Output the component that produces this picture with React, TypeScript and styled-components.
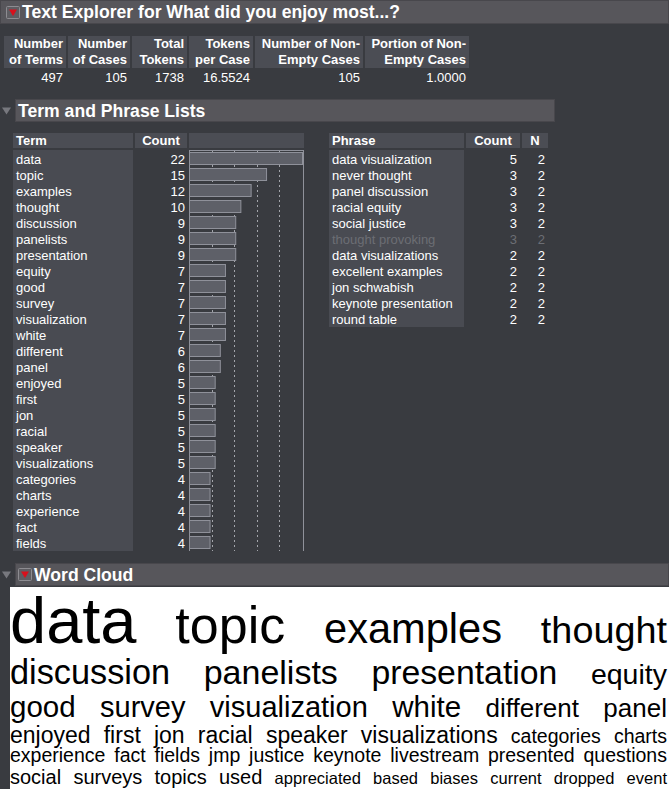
import React from "react";
import styled, { createGlobalStyle } from "styled-components";

const GlobalStyle = createGlobalStyle`
  html, body { margin: 0; padding: 0; background: #393b40; }
  body { font-family: "Liberation Sans", Arial, Helvetica, sans-serif; color: #ffffff; }
`;

const Page = styled.div`
  width: 669px;
  height: 789px;
  overflow: hidden;
  background: #393b40;
  display: flex;
  flex-direction: column;
`;

const TopBar = styled.div`
  height: 24px;
  box-sizing: border-box;
  background: #57565b;
  border: 1px solid #48474c;
  display: flex;
  align-items: center;
  gap: 2px;
  padding-left: 5px;
`;

const SectionRow = styled.div<{ $top: number; $width: number }>`
  display: flex;
  align-items: center;
  margin-top: ${(p) => p.$top}px;
  width: ${(p) => 15 + p.$width}px;
`;

const Disclosure = styled.div`
  width: 15px;
  display: flex;
  justify-content: flex-start;
  padding-left: 2px;
  box-sizing: border-box;
`;

const SectionBar = styled.div<{ $width: number }>`
  width: ${(p) => p.$width}px;
  height: 23px;
  box-sizing: border-box;
  background: #57565b;
  border: 1px solid #48474c;
  display: flex;
  align-items: center;
  gap: 2px;
  padding-left: 2px;
`;

const BarTitle = styled.span`
  font-weight: bold;
  font-size: 17.6px;
  line-height: 20px;
  color: #ffffff;
  white-space: nowrap;
`;

const Summary = styled.div`
  display: grid;
  grid-template-columns: 62px 62px 55px 64px 108px 104px;
  column-gap: 2px;
  row-gap: 2px;
  margin: 12px 0 0 4px;
  font-size: 13px;
  line-height: 16px;
`;

const SumHead = styled.div`
  background: #4b4d54;
  font-weight: bold;
  text-align: right;
  padding-right: 3px;
  white-space: nowrap;
`;

const SumVal = styled.div`
  text-align: right;
  padding-right: 3px;
`;

const Tables = styled.div`
  display: flex;
  align-items: flex-start;
  margin-top: 11px;
  padding-left: 13px;
  gap: 25px;
`;

const Table = styled.div`
  display: flex;
  gap: 2px;
  font-size: 13px;
  line-height: 16px;
`;

const Column = styled.div<{ $width: number }>`
  width: ${(p) => p.$width}px;
  display: flex;
  flex-direction: column;
  gap: 2px;
`;

const HeadCell = styled.div<{ $align?: string }>`
  height: 15px;
  line-height: 16px;
  background: #4b4d54;
  font-weight: bold;
  text-align: ${(p) => p.$align || "center"};
  padding: 0 3px;
  white-space: nowrap;
  overflow: hidden;
`;

const Body = styled.div<{ $shaded?: boolean; $align?: string; $pad?: number }>`
  background: ${(p) => (p.$shaded ? "#494b52" : "transparent")};
  padding-top: 1px;
  text-align: ${(p) => p.$align || "left"};
  padding-left: ${(p) => (p.$align === "right" ? 0 : 3)}px;
  padding-right: ${(p) => p.$pad ?? 0}px;
`;

const Cell = styled.div<{ $dim?: boolean }>`
  height: 16px;
  line-height: 17px;
  white-space: nowrap;
  color: ${(p) => (p.$dim ? "#6c6e74" : "#ffffff")};
`;

const CloudBox = styled.div`
  margin: 1px 0 0 10px;
  background: #ffffff;
  flex: 1;
  color: #000000;
  display: flex;
  flex-direction: column;
  padding-right: 2px;
`;

const CloudLine = styled.div<{ $top: number; $height: number }>`
  display: flex;
  justify-content: space-between;
  align-items: baseline;
  margin-top: ${(p) => p.$top}px;
  height: ${(p) => p.$height}px;
  line-height: 1;
  white-space: nowrap;
`;

const Word = styled.span<{ $size: number }>`
  font-size: ${(p) => p.$size}px;
`;

const RedToggle = () => (
  <svg width="14" height="13" viewBox="0 0 14 13">
    <rect x="0.5" y="0.5" width="13" height="12" rx="1" fill="#5e5d62" stroke="#8d8c91" />
    <polygon points="3,3.5 11,3.5 7,10" fill="#d8101c" />
  </svg>
);

const GrayTriangle = () => (
  <svg width="9" height="8" viewBox="0 0 9 8">
    <polygon points="0,0.5 9,0.5 4.5,7.5" fill="#77787e" />
  </svg>
);

const terms: [string, number][] = [
  ["data", 22], ["topic", 15], ["examples", 12], ["thought", 10], ["discussion", 9],
  ["panelists", 9], ["presentation", 9], ["equity", 7], ["good", 7], ["survey", 7],
  ["visualization", 7], ["white", 7], ["different", 6], ["panel", 6], ["enjoyed", 5],
  ["first", 5], ["jon", 5], ["racial", 5], ["speaker", 5], ["visualizations", 5],
  ["categories", 4], ["charts", 4], ["experience", 4], ["fact", 4], ["fields", 4],
];

const phrases: [string, number, number, boolean?][] = [
  ["data visualization", 5, 2], ["never thought", 3, 2], ["panel discussion", 3, 2],
  ["racial equity", 3, 2], ["social justice", 3, 2], ["thought provoking", 3, 2, true],
  ["data visualizations", 2, 2], ["excellent examples", 2, 2], ["jon schwabish", 2, 2],
  ["keynote presentation", 2, 2], ["round table", 2, 2],
];

const summaryHeads = [
  ["Number", "of Terms"], ["Number", "of Cases"], ["Total", "Tokens"], ["Tokens", "per Case"],
  ["Number of Non-", "Empty Cases"], ["Portion of Non-", "Empty Cases"],
];
const summaryVals = ["497", "105", "1738", "16.5524", "105", "1.0000"];

const cloud: { top: number; height: number; words: [string, number][] }[] = [
  { top: 1, height: 62, words: [["data", 65], ["topic", 52], ["examples", 41.6], ["thought", 37.8]] },
  { top: 5, height: 34, words: [["discussion", 34.3], ["panelists", 34], ["presentation", 33.8], ["equity", 28.5]] },
  { top: 3, height: 30, words: [["good", 29.5], ["survey", 29], ["visualization", 29], ["white", 29.5], ["different", 26], ["panel", 26]] },
  { top: 2, height: 23, words: [["enjoyed", 23], ["first", 23], ["jon", 23], ["racial", 23], ["speaker", 23], ["visualizations", 23], ["categories", 19.5], ["charts", 19.5]] },
  { top: -1, height: 20, words: [["experience", 19.5], ["fact", 19.5], ["fields", 19.5], ["jmp", 19.5], ["justice", 19.5], ["keynote", 19.5], ["livestream", 19.5], ["presented", 19.5], ["questions", 19.5]] },
  { top: 1, height: 20, words: [["social", 20], ["surveys", 20], ["topics", 20], ["used", 20], ["appreciated", 16.5], ["based", 16.5], ["biases", 16.5], ["current", 16.5], ["dropped", 16.5], ["event", 16.5]] },
];

const TermChart = () => {
  const ticks = [23, 45, 68, 90];
  const h = 401;
  return (
    <svg width="115" height={h} viewBox={`0 0 115 ${h}`}>
      {ticks.map((x) => (
        <line key={x} x1={x + 0.5} y1={0} x2={x + 0.5} y2={h} stroke="#a3a5ab" strokeDasharray="2 3" />
      ))}
      <line x1="0.5" y1="0" x2="0.5" y2={h} stroke="#8f919a" />
      <line x1="114.5" y1="0" x2="114.5" y2={h} stroke="#8f919a" />
      <line x1="0" y1="0.5" x2="115" y2="0.5" stroke="#8f919a" />
      {terms.map(([t, c], i) => (
        <rect key={t} x={0.5} y={1 + i * 16 + 1.5} width={(c * 113) / 22} height={12} fill="#5e6068" stroke="#8f919a" />
      ))}
    </svg>
  );
};

export default function App() {
  return (
    <Page>
      <GlobalStyle />
      <TopBar>
        <RedToggle />
        <BarTitle>Text Explorer for What did you enjoy most...?</BarTitle>
      </TopBar>

      <Summary>
        {summaryHeads.map(([a, b]) => (
          <SumHead key={a + b}>
            {a}
            <br />
            {b}
          </SumHead>
        ))}
        {summaryVals.map((v, i) => (
          <SumVal key={i}>{v}</SumVal>
        ))}
      </Summary>

      <SectionRow $top={13} $width={540}>
        <Disclosure>
          <GrayTriangle />
        </Disclosure>
        <SectionBar $width={540}>
          <BarTitle>Term and Phrase Lists</BarTitle>
        </SectionBar>
      </SectionRow>

      <Tables>
        <Table>
          <Column $width={120}>
            <HeadCell $align="left">Term</HeadCell>
            <Body $shaded>
              {terms.map(([t]) => (
                <Cell key={t}>{t}</Cell>
              ))}
            </Body>
          </Column>
          <Column $width={52}>
            <HeadCell>Count</HeadCell>
            <Body $align="right" $pad={2}>
              {terms.map(([t, c]) => (
                <Cell key={t}>{c}</Cell>
              ))}
            </Body>
          </Column>
          <Column $width={115}>
            <HeadCell />
            <TermChart />
          </Column>
        </Table>

        <Table>
          <Column $width={135}>
            <HeadCell $align="left">Phrase</HeadCell>
            <Body $shaded>
              {phrases.map(([p, , , dim]) => (
                <Cell key={p} $dim={dim}>{p}</Cell>
              ))}
            </Body>
          </Column>
          <Column $width={54}>
            <HeadCell>Count</HeadCell>
            <Body $align="right" $pad={3}>
              {phrases.map(([p, c, , dim]) => (
                <Cell key={p} $dim={dim}>{c}</Cell>
              ))}
            </Body>
          </Column>
          <Column $width={26}>
            <HeadCell>N</HeadCell>
            <Body $align="right" $pad={3}>
              {phrases.map(([p, , n, dim]) => (
                <Cell key={p} $dim={dim}>{n}</Cell>
              ))}
            </Body>
          </Column>
        </Table>
      </Tables>

      <SectionRow $top={12} $width={654}>
        <Disclosure>
          <GrayTriangle />
        </Disclosure>
        <SectionBar $width={654}>
          <RedToggle />
          <BarTitle>Word Cloud</BarTitle>
        </SectionBar>
      </SectionRow>

      <CloudBox>
        {cloud.map((line, i) => (
          <CloudLine key={i} $top={line.top} $height={line.height}>
            {line.words.map(([w, s]) => (
              <Word key={w} $size={s}>{w}</Word>
            ))}
          </CloudLine>
        ))}
      </CloudBox>
    </Page>
  );
}
